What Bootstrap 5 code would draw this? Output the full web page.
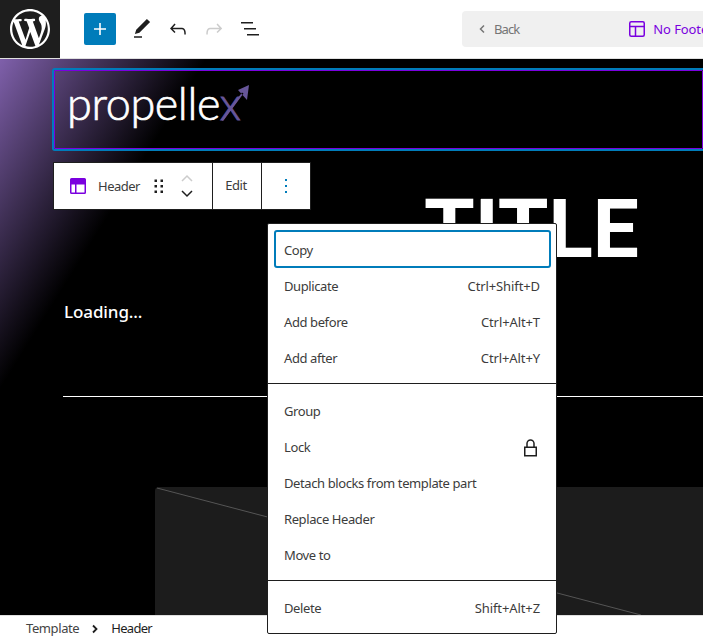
<!DOCTYPE html>
<html lang="en">
<head>
    <meta charset="UTF-8">
    <meta name="viewport" content="width=device-width, initial-scale=1.0">
    <title>Edit template</title>
    <link href="https://cdn.jsdelivr.net/npm/bootstrap@5.3.0/dist/css/bootstrap.min.css" rel="stylesheet">
    <style>
        html, body {
            height: 640px;
            overflow: hidden;
        }
        body {
            font-family: "Noto Sans", "Open Sans", sans-serif;
            font-size: 13px;
            color: #3c3c3c;
            letter-spacing: -0.4px;
        }
        .editor-top {
            height: 59px;
            border-bottom: 1px solid #e0e0e0;
            background: #fff;
        }
        .wp-box {
            width: 60px;
            height: 58px;
            background: #1e1e1e;
            flex-shrink: 0;
        }
        .add-btn {
            width: 32px;
            height: 32px;
            background: #007cba;
            border-radius: 2px;
            margin-left: 24px;
            flex-shrink: 0;
        }
        .tool-ic {
            width: 24px;
            height: 24px;
            fill: #1e1e1e;
            display: block;
            flex-shrink: 0;
        }
        .tool-row {
            margin-left: 14px;
            gap: 12px;
            flex-shrink: 0;
        }
        .doc-pill {
            width: 420px;
            height: 36px;
            margin-left: 200px;
            padding-left: 16px;
            flex-shrink: 0;
            background: #f0f0f0;
            border-radius: 4px;
            color: #757575;
        }
        .doc-back {
            letter-spacing: -0.9px;
            padding-top: 2px;
        }
        .doc-icon {
            margin-left: 110px;
        }
        .doc-label {
            color: #7a00df;
            letter-spacing: -0.1px;
            padding-top: 2px;
        }
        .editor-canvas {
            height: 556px;
            background: linear-gradient(122deg, #7f60ab 0, #000 175px);
            overflow: hidden;
            color: #fff;
        }
        .head-block {
            margin: 11px 0 0 54px;
            height: 79px;
            border: 1px solid #7a00df;
            box-shadow: 0 0 0 2px #007cba;
            border-radius: 1px;
            padding-left: 12px;
        }
        .logo-word {
            font-family: "Lato", sans-serif;
            font-weight: 300;
            font-size: 45px;
            line-height: 65px;
            letter-spacing: -0.4px;
            -webkit-text-stroke: 0.7px #fff;
            display: block;
        }
        .logo-x {
            color: #67569a;
            -webkit-text-stroke: 0.9px #67569a;
        }
        .logo-arrow {
            left: 160px;
            top: 12px;
        }
        .hero-title {
            font-family: "Roboto", sans-serif;
            font-weight: 700;
            font-size: 82px;
            line-height: 60px;
            letter-spacing: 0;
            margin: 50px 64px 0 0;
        }
        .loading-txt {
            font-size: 17px;
            font-weight: 500;
            line-height: 24px;
            letter-spacing: -0.1px;
            margin: 41px 0 0 64px;
        }
        .hero-rule {
            height: 1px;
            background: #fff;
            margin: 72px 0 0 63px;
        }
        .dark-panel {
            height: 128px;
            margin: 90px 0 0 155px;
            background: #1c1c1c;
            border-top-left-radius: 4px;
        }
        .dark-panel svg {
            display: block;
        }
        .block-bar {
            left: 53px;
            top: 162px;
            height: 48px;
            background: #fff;
            border: 1px solid #1e1e1e;
            color: #3c3c3c;
        }
        .bar-cell {
            height: 100%;
        }
        .bar-cell + .bar-cell {
            border-left: 1px solid #1e1e1e;
        }
        .bar-main {
            width: 158px;
            padding-left: 16px;
        }
        .bar-edit {
            width: 49px;
            padding-right: 2px;
        }
        .bar-more {
            width: 49px;
        }
        .bar-name {
            margin: 2px 0 0 12px;
            letter-spacing: -0.5px;
        }
        .drag-dots {
            margin-left: 14px;
        }
        .movers {
            margin-left: 18px;
            gap: 8px;
        }
        .ctx-menu {
            left: 267px;
            top: 223px;
            width: 290px;
            height: 411px;
            padding: 8px;
            background: #fff;
            border: 1px solid #1e1e1e;
            border-radius: 2px;
            color: #3c3c3c;
        }
        .ctx-item {
            height: 36px;
            padding: 2px 8px 0;
        }
        .ctx-focus {
            height: 38px;
            margin: -2px -3px 0 -2px;
            padding: 4px 8px 0;
            border: 2px solid #007cba;
            border-radius: 3px;
        }
        .ctx-keys {
            letter-spacing: -0.1px;
        }
        .ctx-lock {
            margin-right: 3px;
        }
        .ctx-sep {
            height: 1px;
            background: #1e1e1e;
            margin: 7px -8px 9px;
        }
        .editor-foot {
            height: 25px;
            background: #fff;
            border-top: 1px solid #e0e0e0;
            padding: 2px 0 0 26px;
            color: #444;
        }
        .foot-sep {
            margin: 0 12px;
        }
        .foot-current {
            color: #1e1e1e;
            letter-spacing: -0.7px;
        }
    </style>
</head>
<body>
    <div class="position-relative">
        <!-- top bar -->
        <div class="editor-top d-flex align-items-center overflow-hidden">
            <div class="wp-box d-flex align-items-center justify-content-center">
                <svg width="40" height="40" viewBox="0 0 20 20" fill="#fff"><path d="M20 10c0-5.51-4.49-10-10-10C4.48 0 0 4.49 0 10c0 5.52 4.48 10 10 10 5.51 0 10-4.48 10-10zM7.78 15.37L4.37 6.22c.55-.02 1.17-.08 1.17-.08.5-.06.44-1.13-.06-1.11 0 0-1.45.11-2.37.11-.18 0-.37 0-.58-.01C4.12 2.69 6.87 1.11 10 1.11c2.33 0 4.45.87 6.05 2.34-.68-.11-1.65.39-1.65 1.58 0 .74.45 1.36.9 2.1.35.61.55 1.36.55 2.46 0 1.49-1.4 5-1.4 5l-3.03-8.37c.54-.02.82-.17.82-.17.5-.05.44-1.25-.06-1.22 0 0-1.44.12-2.38.12-.87 0-2.33-.12-2.33-.12-.5-.03-.56 1.2-.06 1.22l.92.08 1.26 3.41zM17.41 10c.24-.64.74-1.87.43-4.25.7 1.29 1.05 2.71 1.05 4.25 0 3.29-1.73 6.24-4.4 7.78.97-2.59 1.94-5.2 2.92-7.78zM6.1 18.09C3.12 16.65 1.11 13.53 1.11 10c0-1.3.23-2.48.72-3.59C3.25 10.3 4.67 14.2 6.1 18.09zm4.03-6.63l2.58 6.98c-.86.29-1.76.45-2.71.45-.79 0-1.57-.11-2.29-.33.81-2.38 1.62-4.74 2.42-7.1z"/></svg>
            </div>
            <div class="add-btn d-flex align-items-center justify-content-center">
                <svg width="24" height="24" viewBox="0 0 24 24" fill="#fff"><path d="M18 11.2h-5.2V6h-1.6v5.2H6v1.6h5.2V18h1.6v-5.2H18z"/></svg>
            </div>
            <div class="tool-row d-flex align-items-center">
                <svg class="tool-ic" viewBox="0 0 24 24"><path d="M20.1 5.1L16.9 2 6.2 12.7l-1.3 4.4 4.5-1.3L20.1 5.1zM4 20.8h8v-1.5H4v1.5z"/></svg>
                <svg class="tool-ic" viewBox="0 0 24 24"><path d="M18.3 11.7c-.6-.6-1.4-.9-2.3-.9H6.7l2.9-3.3-1.1-1-4.5 5L8.5 16l1-1-2.7-2.7H16c.5 0 .9.2 1.3.5 1 1 1 3.4 1 4.5v.3h1.5v-.2c0-1.5 0-4.3-1.5-5.7z"/></svg>
                <svg class="tool-ic" viewBox="0 0 24 24" style="fill:#ccc"><path d="M15.6 6.5l-1.1 1 2.9 3.3H8c-.9 0-1.7.3-2.3.9-1.4 1.5-1.4 4.2-1.4 5.6v.2h1.5v-.3c0-1.1 0-3.5 1-4.5.3-.3.7-.5 1.3-.5h9.2L14.5 15l1.1 1.1 4.6-4.6-4.6-5z"/></svg>
                <svg class="tool-ic" viewBox="0 0 24 24"><path d="M3 5h12v1.5H3zM6 11h12v1.5H6zM9 17h12v1.5H9z"/></svg>
            </div>
            <div class="doc-pill d-flex align-items-center">
                <svg width="8" height="10" viewBox="0 0 8 10" fill="none" stroke="#757575" stroke-width="1.5"><path d="M6 1.5 2.5 5 6 8.5"/></svg>
                <span class="doc-back ms-2">Back</span>
                <svg class="doc-icon" width="16" height="16" viewBox="0 0 16 16" fill="none" stroke="#7a00df" stroke-width="1.5"><rect x=".75" y=".75" width="14.5" height="14.5" rx="1.5"/><path d="M1 5.5h14M6.5 5.5V15"/></svg>
                <span class="doc-label ms-2">No Footer</span>
            </div>
        </div>

        <!-- canvas -->
        <div class="editor-canvas">
            <div class="head-block position-relative">
                <span class="logo-word">propelle<span class="logo-x">x</span></span>
                <svg class="logo-arrow position-absolute" width="36" height="40" viewBox="0 0 36 40" fill="#67569a"><path d="M6.5 37 27 9.5l1.500 1L8 38zM34 2 23 7l9 10z"/></svg>
            </div>
            <div class="hero-title text-end">TITLE</div>
            <div class="loading-txt">Loading...</div>
            <div class="hero-rule"></div>
            <div class="dark-panel overflow-hidden">
                <svg width="548" height="128" viewBox="0 0 548 128"><path d="M2 1 486 128" stroke="#555" stroke-width="1" fill="none"/></svg>
            </div>
        </div>

        <!-- footer breadcrumb -->
        <div class="editor-foot d-flex align-items-center">
            <span>Template</span>
            <svg class="foot-sep" width="8" height="10" viewBox="0 0 8 10" fill="none" stroke="#1e1e1e" stroke-width="1.8"><path d="M2 1.5 5.5 5 2 8.5"/></svg>
            <span class="foot-current">Header</span>
        </div>

        <!-- block toolbar -->
        <div class="block-bar position-absolute d-flex">
            <div class="bar-cell bar-main d-flex align-items-center">
                <svg width="16" height="16" viewBox="0 0 16 16"><path fill="#7a00df" d="M1.5 0h13A1.5 1.5 0 0 1 16 1.5v13a1.5 1.5 0 0 1-1.5 1.5h-13A1.5 1.5 0 0 1 0 14.5v-13A1.5 1.5 0 0 1 1.5 0z"/><path fill="#fff" d="M1.500 6.500h3.500v8h-3.500zM6.500 6.500h8v8h-8z"/></svg>
                <span class="bar-name">Header</span>
                <svg class="drag-dots" width="9" height="14" viewBox="0 0 9 14" fill="#1e1e1e"><path d="M.5 .5h2.500v2.500H.5zM6.500 .5h2.500v2.500H6.500zM.5 6h2.500v2.500H.5zM6.500 6h2.500v2.500H6.500zM.5 11.500h2.500v2.500H.5zM6.500 11.500h2.500v2.500H6.500z"/></svg>
                <div class="movers d-flex flex-column">
                    <svg class="d-block" width="12" height="8" viewBox="0 0 12 8" fill="none" stroke="#ccc" stroke-width="1.5"><path d="M1 7l5-5 5 5"/></svg>
                    <svg class="d-block" width="12" height="8" viewBox="0 0 12 8" fill="none" stroke="#1e1e1e" stroke-width="1.5"><path d="M1 1l5 5 5-5"/></svg>
                </div>
            </div>
            <div class="bar-cell bar-edit d-flex align-items-center justify-content-center">Edit</div>
            <div class="bar-cell bar-more d-flex align-items-center justify-content-center">
                <svg width="4" height="14" viewBox="0 0 4 14" fill="#007cba"><path d="M1 0h2v2H1zM1 6h2v2H1zM1 12h2v2H1z"/></svg>
            </div>
        </div>

        <!-- options menu -->
        <div class="ctx-menu position-absolute">
            <div class="ctx-item ctx-focus d-flex align-items-center">Copy</div>
            <div class="ctx-item d-flex align-items-center justify-content-between"><span>Duplicate</span><span class="ctx-keys">Ctrl+Shift+D</span></div>
            <div class="ctx-item d-flex align-items-center justify-content-between"><span>Add before</span><span class="ctx-keys">Ctrl+Alt+T</span></div>
            <div class="ctx-item d-flex align-items-center justify-content-between"><span>Add after</span><span class="ctx-keys">Ctrl+Alt+Y</span></div>
            <div class="ctx-sep"></div>
            <div class="ctx-item d-flex align-items-center">Group</div>
            <div class="ctx-item d-flex align-items-center justify-content-between">
                <span>Lock</span>
                <svg class="ctx-lock" width="13" height="18" viewBox="0 0 13 18" fill="none" stroke="#1e1e1e" stroke-width="1.5"><rect x=".75" y="8.25" width="11.5" height="8.5"/><path d="M3 8V4.5a3.5 3.5 0 0 1 7 0V8"/></svg>
            </div>
            <div class="ctx-item d-flex align-items-center">Detach blocks from template part</div>
            <div class="ctx-item d-flex align-items-center">Replace Header</div>
            <div class="ctx-item d-flex align-items-center">Move to</div>
            <div class="ctx-sep"></div>
            <div class="ctx-item d-flex align-items-center justify-content-between"><span>Delete</span><span class="ctx-keys">Shift+Alt+Z</span></div>
        </div>
    </div>
    <script src="https://cdn.jsdelivr.net/npm/bootstrap@5.3.0/dist/js/bootstrap.bundle.min.js"></script>
</body>
</html>
